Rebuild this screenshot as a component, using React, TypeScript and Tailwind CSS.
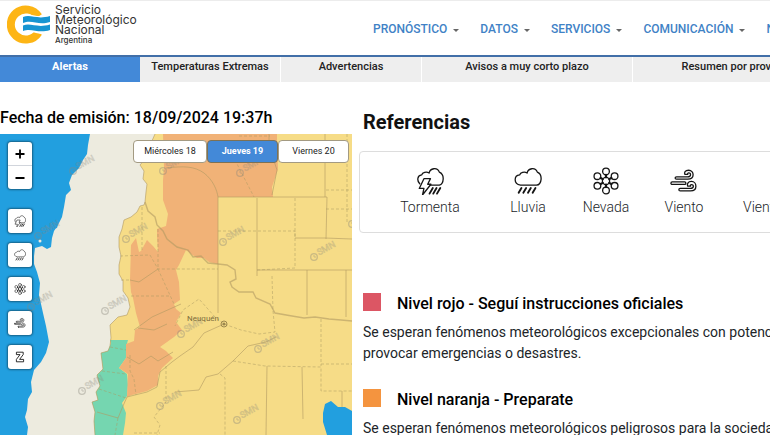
import type { ReactNode } from "react";

const navItems = ["Pronóstico", "Datos", "Servicios", "Comunicación", "Nosotros"];

const tabs = [
  { label: "Alertas", width: "w-[140px]", active: true },
  { label: "Temperaturas Extremas", width: "w-[141px]" },
  { label: "Advertencias", width: "w-[141px]" },
  { label: "Avisos a muy corto plazo", width: "w-[211px]" },
  { label: "Resumen por provincia", width: "w-[211px]" },
];

const days = [
  { label: "Miércoles 18", width: "w-[74px]" },
  { label: "Jueves 19", width: "w-[71px]", active: true },
  { label: "Viernes 20", width: "w-[71px]" },
];

const levels = [
  {
    title: "Nivel rojo - Seguí instrucciones oficiales",
    color: "bg-[#dc5664]",
    text: "Se esperan fenómenos meteorológicos excepcionales con potencial para provocar emergencias o desastres.",
  },
  {
    title: "Nivel naranja - Preparate",
    color: "bg-[#f4943f]",
    text: "Se esperan fenómenos meteorológicos peligrosos para la sociedad, la vida, los bienes y el medio ambiente.",
  },
];

interface IconProps {
  className?: string;
}

function Icon({ className, children }: IconProps & { children: ReactNode }) {
  return (
    <svg
      viewBox="0 0 30 30"
      className={className}
      fill="none"
      stroke="#151515"
      strokeWidth="1.4"
      strokeLinecap="round"
      strokeLinejoin="round"
      aria-hidden="true"
    >
      {children}
    </svg>
  );
}

function StormIcon({ className }: IconProps) {
  return (
    <Icon className={className}>
      <path d="M4 18C1 15 1 9 6 8.500C7 6 11 4.500 14 6.500C15 1 23 0 25 5.500C31 8 30 18 25 19.500H15" />
      <path d="M8.500 12.500H15.500L12.500 18.500H16L7 30L8.500 23H3.500Z" fill="#fff" />
      <path d="M18 22.500L14.500 28.500M22 22.500L18.500 28.500M26 22.500L22.500 28.500" strokeWidth="2" />
    </Icon>
  );
}

function RainIcon({ className }: IconProps) {
  return (
    <Icon className={className}>
      <path d="M7 19.500C-1 18 0 9 6 8.500C7 6 11 4.500 14 6.500C15 1 23 0 25 5.500C31 8 30 19 24 19.500Z" />
      <path d="M8 22.500L5 27.500M13 22.500L10 27.500M18 22.500L15 27.500M23 22.500L20 27.500" strokeWidth="2" />
    </Icon>
  );
}

function SnowIcon({ className }: IconProps) {
  return (
    <Icon className={className}>
      <circle cx="15" cy="15" r="3.900" />
      <circle cx="15" cy="4.800" r="3.600" />
      <circle cx="15" cy="25.200" r="3.600" />
      <circle cx="5.800" cy="9.800" r="3.600" />
      <circle cx="24.200" cy="9.800" r="3.600" />
      <circle cx="5.800" cy="20.200" r="3.600" />
      <circle cx="24.200" cy="20.200" r="3.600" />
      <path
        d="M15 8.500V11M15 19V21.500M9.300 11.700L11.500 13M18.500 17L20.700 18.300M20.700 11.700L18.500 13M11.500 17L9.300 18.300"
        strokeWidth="2.400"
      />
    </Icon>
  );
}

function WindIcon({ className }: IconProps) {
  return (
    <Icon className={className}>
      <path d="M7 13H19C27 13 26 3.500 20 3.500C16 3.500 15 6 16 8H19C18 6 22 5.500 22 8.200C22 10 20.500 10.500 19 10.500H7C5 10.500 5 13 7 13Z" />
      <rect x="1" y="16" width="16" height="2.600" rx="1.300" />
      <path d="M11 25.500H22C30 25.500 29 15.500 23 15.500C19 15.500 18 18.500 19 20.500H22C21 18.500 25 18 25 20.700C25 22.500 23.500 23 22 23H11C9 23 9 25.500 11 25.500Z" />
    </Icon>
  );
}

function ZondaIcon({ className }: IconProps) {
  return (
    <Icon className={className}>
      <path
        d="M7 3H23V9L14 21H24V27H6V21L15 9H7Z"
        strokeWidth="2.200"
      />
    </Icon>
  );
}

const phenomena = [
  { label: "Tormenta", icon: StormIcon, width: "w-[98px]" },
  { label: "Lluvia", icon: RainIcon, width: "w-[98px]" },
  { label: "Nevada", icon: SnowIcon, width: "w-[58px]" },
  { label: "Viento", icon: WindIcon, width: "w-[98px]" },
];

const layers = [
  { label: "Tormenta", icon: StormIcon },
  { label: "Lluvia", icon: RainIcon },
  { label: "Nevada", icon: SnowIcon },
  { label: "Viento", icon: WindIcon },
  { label: "Zonda", icon: ZondaIcon },
];

function Logo() {
  return (
    <svg viewBox="0 0 44 40" className="h-10 w-11 shrink-0" aria-hidden="true">
      <path
        d="M31.500 11.500A15 15 0 1 0 31.500 27.500"
        fill="none"
        stroke="#fdb515"
        strokeWidth="8"
      />
      <path d="M15 10C23 7 29 14 43 10V28C32 32 26 24 15 28Z" fill="#fff" />
      <path d="M16 12C24 9 30 15 43 11V17C31 21 25 14 16 18Z" fill="#1795d2" />
      <path d="M16 20.500C24 17.500 30 23.500 43 19.500V25C31 29 25 22.500 16 26Z" fill="#1795d2" />
    </svg>
  );
}

const watermarks = [
  [73, 171], [163, 171], [240, 173], [38, 236], [126, 239], [223, 242], [314, 257],
  [352, 224], [31, 307], [105, 311], [181, 334], [258, 349], [82, 391], [160, 406], [237, 420],
];

function AlertMap() {
  return (
    <svg
      viewBox="0 134 352 301"
      preserveAspectRatio="xMinYMin slice"
      className="block h-auto w-full"
      role="img"
      aria-label="Mapa de alertas"
    >
      <rect x="0" y="134" width="352" height="301" fill="#edebdf" />
      <path
        d="M0 134H90L88 145L87 154L83 160L79 168L72 175L69 183L71 190L66 195L64 207L62 217L58 225L54 231L52 238L51 247L47 249L42 246L35 248L34 256L34 264L37 272L40 283L39 295L43 313L46 326L49 342L46 353L41 362L34 370L31 382L32 392L28 399L27 410L25 417L28 427L27 435H0Z"
        fill="#229fdf"
      />
      <circle cx="55" cy="226" r="2.500" fill="#229fdf" />
      <circle cx="40" cy="241" r="1.500" fill="#edebdf" />

      <path
        d="M155 134L151 143L150 153L140 165L144 171L143 179L147 184L146 192L145 202L144 205L140 206L137 212L131 217L124 220L122 229L119 237L119 247L121 256L119 265L119 274L123 281L123 291L128 298L130 307L127 315L118 317L110 325L111 338L110 340V346L108 351L101 353L103 369L97 375L100 386L96 392L98 400L92 402L95 412L94 421L95 435H352V134Z"
        fill="#f6dc87"
      />
      <path
        d="M110 340H128L126 347V358L119 368L127 374L128 385L127 396L122 403L126 413L125 423L123 435H95L94 421L95 412L92 402L98 400L96 392L100 386L97 375L103 369L101 353L108 351L111 343Z"
        fill="#75d6b0"
      />
      <path
        d="M163 134H277V146L278 169L272 187L273 197H218V264L209 262L204 258L197 258L191 254L186 250L179 265L176 270L179 282L180 300L174 304L176 309L181 313L176 322L182 330L174 337L160 347L166 351L173 358L162 368L158 376L158 385L147 391L132 395L127 397L128 374L119 368L126 358V344L134 341L135 330L140 327L136 313L133 298L131 292L130 280L131 245L136 238L139 252L141 251L147 240L153 246L158 252L157 236V229L166 226L168 214L163 200V180L164 168Z"
        fill="#f1b277"
      />

      <g fill="none" stroke="#b19a62" strokeWidth="1" strokeOpacity="0.6">
        <path d="M155 134L151 143L150 153L140 165L144 171L143 179L147 184L146 192L145 202L144 205L140 206L137 212L131 217L124 220L122 229L119 237L119 247L121 256L119 265L119 274L123 281L123 291L128 298L130 307L127 315L118 317L110 325L111 338L110 346L108 351L101 353L103 369L97 375L100 386L96 392L98 400L92 402L95 412L94 421L95 435" />
        <path d="M166 168C184 166 194 166 204 173C213 180 217 190 218 197V263V313" />
        <path d="M145 202L148 211L155 217L157 225L163 231L167 239L177 247L188 250L193 257L201 256L208 263L218 264L227 265L235 270L236 279L230 282L232 287L239 292L253 292L256 298L270 304L275 313L292 316L304 318L315 317L329 319L341 320L352 321" strokeWidth="1.400" />
        <path d="M218 197H327L326 239M269 134V146L277 170L272 195M257 198L257 276M325 134V197M295 238H325L352 239M257 270H352M307 270V315M346 270V317" />
        <path d="M127 397L147 392L157 387L160 372L172 362L180 356L193 347L204 333L224 324M175 392L199 390L206 377L218 374L233 361L248 346L266 342L276 337M267 366L266 435M302 367L303 419M342 391V407M97 412L118 418L123 406L127 397M134 330L152 317L181 304M130 280L139 282L158 269M127 357L139 364L151 356L158 361L173 352M138 328L154 330L167 324" />
      </g>

      <g fill="none" stroke="#a99a61" strokeWidth="1" strokeOpacity="0.5" strokeDasharray="3 2">
        <path d="M142 207V252M120 256L150 255L158 269H218M158 229V269L174 304M131 296H171M121 280H131M218 231H295V238M295 198V268L257 270M326 190H352M326 209H352M347 134V222M235 160L254 197M272 276L273 311L275 332L259 334L241 330L224 324L215 317L199 299L183 310L175 326" />
        <path d="M233 361L265 366L321 367V391H352M321 319V366M321 364H352M220 374L225 378V435M166 366L166 402L154 417L160 425L157 435M134 433H160M110 347L126 350M102 371L126 374M99 389L126 398M118 418L115 435M130 355V371L134 379L136 395M239 136H270" />
      </g>
      <path
        d="M352 411L345 407L338 407L331 401L325 404L323 413V422L327 435H352Z"
        fill="#229fdf"
      />

      {watermarks.map(([x, y]) => (
        <g key={`${x}-${y}`} opacity="0.4">
          <circle cx={x} cy={y} r="3.300" fill="none" stroke="#8a877c" strokeWidth="1.300" />
          <path d={`M${x} ${y - 2}V${y}H${x + 2}`} fill="none" stroke="#8a877c" />
          <text
            x={x + 5}
            y={y + 1}
            transform={`rotate(-28 ${x} ${y})`}
            fontSize="9"
            fontFamily="Roboto, sans-serif"
            fill="none"
            stroke="#8a877c"
            strokeWidth="0.500"
          >
            SMN
          </text>
        </g>
      ))}

      <text x="187" y="321" fontSize="8" fontFamily="Roboto, sans-serif" fill="#7d6d3d">
        Neuquén
      </text>
      <circle cx="224" cy="324" r="3" fill="none" stroke="#9c874d" />
      <circle cx="224" cy="324" r="1.500" fill="#9c874d" />
    </svg>
  );
}

function MapPanel() {
  return (
    <div className="relative overflow-hidden">
      <AlertMap />

      <div className="absolute left-2 top-2 flex flex-col gap-5">
        <div className="flex h-[47px] w-6 flex-col overflow-hidden rounded-[3px] bg-white text-black shadow-[0_0_2px_1px_rgba(0,0,0,0.4)]">
          <button aria-label="Acercar" className="flex flex-1 items-center justify-center border-b border-gray-300">
            <svg viewBox="0 0 10 10" className="size-2.5" stroke="currentColor" strokeWidth="1.800">
              <path d="M0.500 5H9.500M5 0.500V9.500" />
            </svg>
          </button>
          <button aria-label="Alejar" className="flex flex-1 items-center justify-center">
            <svg viewBox="0 0 10 10" className="size-2.5" stroke="currentColor" strokeWidth="1.800">
              <path d="M0.500 5H9.500" />
            </svg>
          </button>
        </div>
        <div className="flex flex-col gap-2.5">
          {layers.map(({ label, icon: LayerIcon }) => (
            <button
              key={label}
              aria-label={label}
              className="flex size-6 items-center justify-center rounded-[3px] bg-white shadow-[0_0_2px_1px_rgba(0,0,0,0.4)]"
            >
              <LayerIcon className="size-3" />
            </button>
          ))}
        </div>
      </div>

      <div className="absolute right-[3px] top-1.5 flex text-[9px]">
        {days.map((day) => (
          <button
            key={day.label}
            className={
              day.active
                ? `${day.width} h-[23px] rounded-[4px] border border-[#7d7154] bg-[#4389d8] font-bold text-white`
                : `${day.width} h-[23px] rounded-[4px] border border-[#a39a82] bg-white text-[#222]`
            }
          >
            {day.label}
          </button>
        ))}
      </div>
    </div>
  );
}

function Header() {
  return (
    <header className="flex border-t border-[#ececec] border-b-2 border-b-[#416fa8] bg-white">
      <a href="#" className="flex w-[373px] shrink-0 gap-1 pb-2.5 pl-[7px] pt-1 text-[#333]">
        <Logo />
        <span className="flex flex-col font-['Inter',sans-serif] text-[12px] leading-[10px]">
          <span>Servicio</span>
          <span>Meteorológico</span>
          <span>Nacional</span>
          <span className="text-[8px] font-medium">Argentina</span>
        </span>
      </a>
      <nav className="flex shrink-0 items-center gap-[21px] pt-0.5">
        {navItems.map((item) => (
          <a
            key={item}
            href="#"
            className="flex items-center gap-1.5 text-[12px] font-medium uppercase text-[#3f82c6]"
          >
            {item}
            <span className="mt-0.5 border-x-[3px] border-t-[3px] border-x-transparent border-t-[#666]" />
          </a>
        ))}
      </nav>
    </header>
  );
}

export default function App() {
  return (
    <div className="w-full overflow-hidden bg-white font-['Roboto',sans-serif] text-[#212529]">
      <Header />

      <div className="flex text-[11px] font-medium text-[#222]">
        {tabs.map((tab) => (
          <a
            key={tab.label}
            href="#"
            className={
              tab.active
                ? `${tab.width} h-[25px] shrink-0 whitespace-nowrap bg-[#4389d8] pt-0.5 text-center font-bold text-white`
                : `${tab.width} h-[25px] shrink-0 whitespace-nowrap border-r border-white bg-[#eee] pt-0.5 text-center`
            }
          >
            {tab.label}
          </a>
        ))}
      </div>

      <main className="grid grid-cols-[352px_minmax(0,1fr)] gap-[7px]">
        <section>
          <h2 className="pb-[5px] pt-[25px] text-[16px] font-medium leading-[22px] text-black">
            Fecha de emisión: 18/09/2024 19:37h
          </h2>
          <MapPanel />
        </section>

        <section className="pt-7">
          <h1 className="pl-1 text-[20px] font-bold leading-6 text-[#111]">Referencias</h1>
          <div className="mt-[17px] flex h-[82px] w-[480px] rounded border border-[#ddd] pl-[21px] pt-[15px]">
            {phenomena.map(({ label, icon: PhenomenonIcon, width }) => (
              <div key={label} className={`${width} flex shrink-0 flex-col items-center gap-0.5`}>
                <PhenomenonIcon className="size-7" />
                <span className="text-[14px] font-light leading-5">{label}</span>
              </div>
            ))}
            <div className="flex shrink-0 flex-col pl-[10px] pt-[30px]">
              <span className="text-[14px] font-light leading-5">Viento Zonda</span>
            </div>
          </div>

          <div className="flex flex-col pl-1 pt-[60px]">
            {levels.map((level) => (
              <article key={level.title} className="h-24 w-[470px]">
                <div className="flex items-start gap-4">
                  <span className={`${level.color} size-[18px]`} />
                  <h3 className="pt-px text-[16px] font-medium leading-5 text-black">{level.title}</h3>
                </div>
                <p className="pt-2 text-[14px] leading-[21px]">{level.text}</p>
              </article>
            ))}
          </div>
        </section>
      </main>
    </div>
  );
}
